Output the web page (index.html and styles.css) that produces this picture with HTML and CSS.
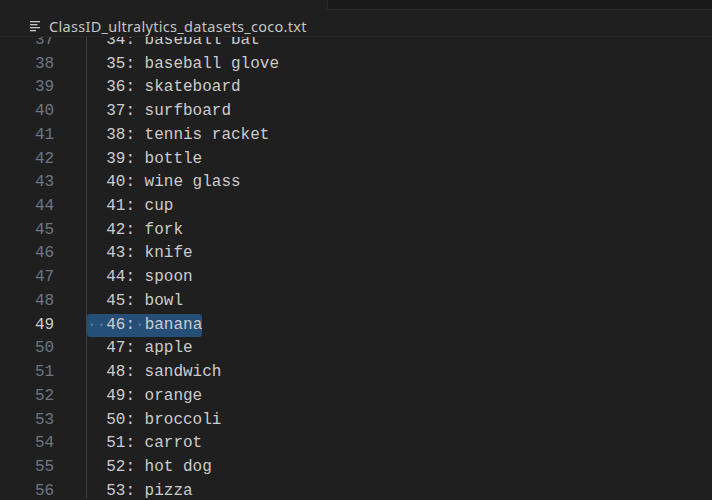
FILE: index.html
```html
<!DOCTYPE html>
<html>
<head>
<meta charset="utf-8">
<link rel="stylesheet" href="styles.css">
</head>
<body>
<div class="topbar">
  <div class="topbar-left"></div>
  <div class="topbar-panel"></div>
</div>
<div class="crumbs">
  <svg class="crumb-icon" width="12" height="11" viewBox="0 0 12 11">
    <rect x="0" y="0" width="10" height="1.3" fill="#c5c5c5"/>
    <rect x="0" y="3" width="7.5" height="1.3" fill="#c5c5c5"/>
    <rect x="0" y="6" width="10" height="1.3" fill="#c5c5c5"/>
    <rect x="0" y="9" width="6" height="1.3" fill="#c5c5c5"/>
  </svg>
  <span class="crumb-title">ClassID_ultralytics_datasets_coco.txt</span>
</div>
<div class="editor">
  <div class="lines">
    <div class="line"><span class="ln">37</span><span class="code">  34: baseball bat</span></div>
    <div class="line"><span class="ln">38</span><span class="code">  35: baseball glove</span></div>
    <div class="line"><span class="ln">39</span><span class="code">  36: skateboard</span></div>
    <div class="line"><span class="ln">40</span><span class="code">  37: surfboard</span></div>
    <div class="line"><span class="ln">41</span><span class="code">  38: tennis racket</span></div>
    <div class="line"><span class="ln">42</span><span class="code">  39: bottle</span></div>
    <div class="line"><span class="ln">43</span><span class="code">  40: wine glass</span></div>
    <div class="line"><span class="ln">44</span><span class="code">  41: cup</span></div>
    <div class="line"><span class="ln">45</span><span class="code">  42: fork</span></div>
    <div class="line"><span class="ln">46</span><span class="code">  43: knife</span></div>
    <div class="line"><span class="ln">47</span><span class="code">  44: spoon</span></div>
    <div class="line"><span class="ln">48</span><span class="code">  45: bowl</span></div>
    <div class="line active"><span class="ln">49</span><span class="code"><span class="sel"><span class="ws">·</span><span class="ws">·</span>46:<span class="ws">·</span>banana</span></span></div>
    <div class="line"><span class="ln">50</span><span class="code">  47: apple</span></div>
    <div class="line"><span class="ln">51</span><span class="code">  48: sandwich</span></div>
    <div class="line"><span class="ln">52</span><span class="code">  49: orange</span></div>
    <div class="line"><span class="ln">53</span><span class="code">  50: broccoli</span></div>
    <div class="line"><span class="ln">54</span><span class="code">  51: carrot</span></div>
    <div class="line"><span class="ln">55</span><span class="code">  52: hot dog</span></div>
    <div class="line"><span class="ln">56</span><span class="code">  53: pizza</span></div>
    <div class="line"><span class="ln">57</span><span class="code">  54: donut</span></div>
  </div>
</div>
</body>
</html>
```
FILE: styles.css
```css
html, body {
  margin: 0;
  padding: 0;
  background: #1f1f1f;
  width: 712px;
  height: 500px;
  overflow: hidden;
}

.topbar {
  display: flex;
  height: 10px;
}
.topbar-left {
  width: 327px;
  flex: none;
}
.topbar-panel {
  flex: 1;
  background: #181818;
  border-left: 1px solid #2b2b2b;
  border-bottom: 1px solid #2b2b2b;
}

.crumbs {
  height: 28px;
  display: flex;
  align-items: center;
  padding-left: 30px;
  padding-top: 8px;
  padding-bottom: 1px;
  gap: 7px;
  box-sizing: border-box;
  border-bottom: 1px solid #262626;
  margin-top: -1px;
}
.crumb-icon {
  flex: none;
  margin-top: 0px;
}
.crumb-title {
  font-family: "Noto Sans", "Open Sans", sans-serif;
  font-size: 14.5px;
  color: #c4c4c4;
  letter-spacing: 0.3px;
}

.editor {
  height: 462px;
  overflow: hidden;
}
.lines {
  margin-top: -8px;
}
.line {
  display: flex;
  height: 23.72px;
  line-height: 23.72px;
  font-family: "Liberation Mono", monospace;
  font-size: 16px;
  white-space: pre;
}
.ln {
  width: 54.2px;
  flex: none;
  text-align: right;
  color: #6e7681;
  margin-right: 31.8px;
}
.line.active .ln {
  color: #cccccc;
}
.code {
  border-left: 1px solid #404040;
  color: #cccccc;
  flex: 1;
}
.sel {
  display: inline-block;
  background: #264f78;
  border-radius: 3px;
}
.ws {
  color: #5f7d9c;
}
```
